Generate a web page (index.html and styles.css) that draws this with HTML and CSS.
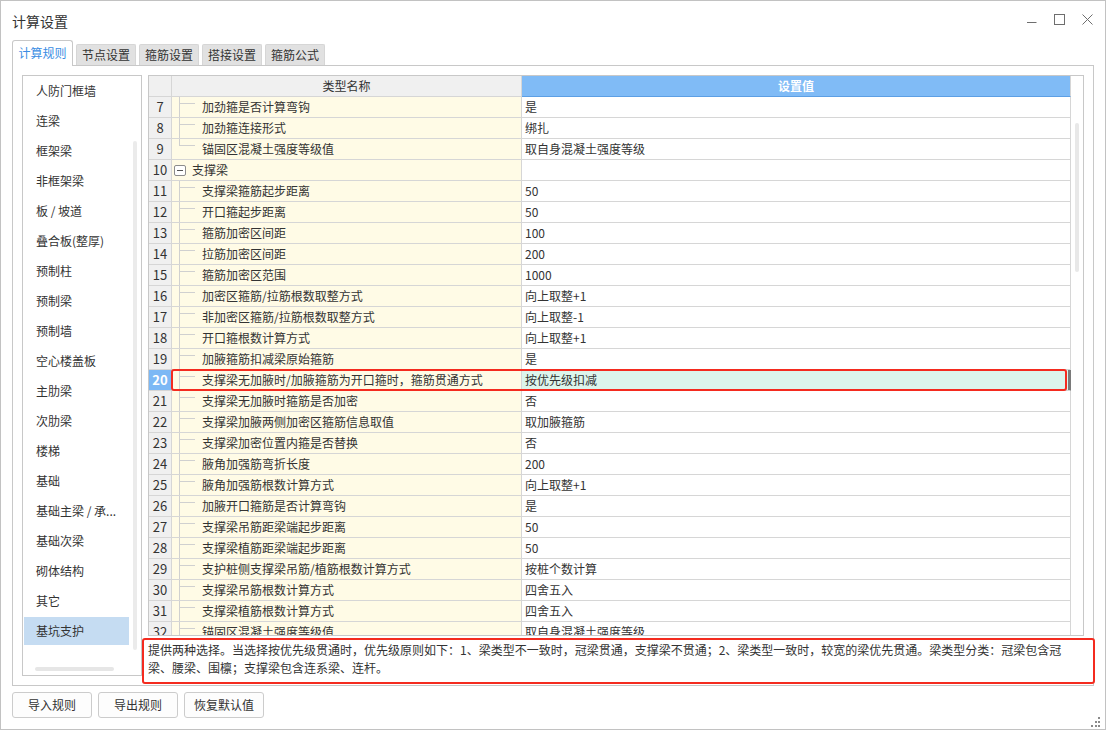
FILE: index.html
```html
<!DOCTYPE html>
<html lang="zh">
<head>
<meta charset="utf-8">
<title>计算设置</title>
<link rel="stylesheet" href="styles.css">
</head>
<body>
<div class="window">
  <div class="titlebar">
    <div class="title">计算设置</div>
    <div class="controls">
      <svg class="ctl" width="28" height="28" viewBox="0 0 28 28"><path d="M10 15.5H19.5" stroke="#6e6e6e" stroke-width="1" fill="none"/></svg>
      <svg class="ctl" width="28" height="28" viewBox="0 0 28 28"><rect x="9.5" y="7.5" width="10" height="10" stroke="#6e6e6e" stroke-width="1" fill="none"/></svg>
      <svg class="ctl" width="28" height="28" viewBox="0 0 28 28"><path d="M9.5 7.5L19.5 17.5M19.5 7.5L9.5 17.5" stroke="#6e6e6e" stroke-width="1" fill="none"/></svg>
    </div>
  </div>
  <div class="tabs">
    <div class="tab active">计算规则</div>
    <div class="tab">节点设置</div>
    <div class="tab">箍筋设置</div>
    <div class="tab">搭接设置</div>
    <div class="tab">箍筋公式</div>
  </div>
  <div class="panel">
    <div class="list">
      <div class="item">人防门框墙</div>
      <div class="item">连梁</div>
      <div class="item">框架梁</div>
      <div class="item">非框架梁</div>
      <div class="item">板 / 坡道</div>
      <div class="item">叠合板(整厚)</div>
      <div class="item">预制柱</div>
      <div class="item">预制梁</div>
      <div class="item">预制墙</div>
      <div class="item">空心楼盖板</div>
      <div class="item">主肋梁</div>
      <div class="item">次肋梁</div>
      <div class="item">楼梯</div>
      <div class="item">基础</div>
      <div class="item">基础主梁 / 承...</div>
      <div class="item">基础次梁</div>
      <div class="item">砌体结构</div>
      <div class="item">其它</div>
      <div class="item selected">基坑支护</div>
      <div class="vthumb"></div>
      <div class="hthumb"></div>
    </div>
    <div class="right">
      <div class="tablebox">
        <div class="grid">
          <div class="row head"><div class="c num"></div><div class="c name">类型名称</div><div class="c val">设置值</div></div>
          <div class="row"><div class="c num">7</div><div class="c name"><span class="tw"></span>加劲箍是否计算弯钩</div><div class="c val">是</div></div>
          <div class="row"><div class="c num">8</div><div class="c name"><span class="tw"></span>加劲箍连接形式</div><div class="c val">绑扎</div></div>
          <div class="row"><div class="c num">9</div><div class="c name"><span class="tw end"></span>锚固区混凝土强度等级值</div><div class="c val">取自身混凝土强度等级</div></div>
          <div class="row"><div class="c num">10</div><div class="c name"><span class="tog"></span>支撑梁</div><div class="c val"></div></div>
          <div class="row"><div class="c num">11</div><div class="c name"><span class="tw"></span>支撑梁箍筋起步距离</div><div class="c val">50</div></div>
          <div class="row"><div class="c num">12</div><div class="c name"><span class="tw"></span>开口箍起步距离</div><div class="c val">50</div></div>
          <div class="row"><div class="c num">13</div><div class="c name"><span class="tw"></span>箍筋加密区间距</div><div class="c val">100</div></div>
          <div class="row"><div class="c num">14</div><div class="c name"><span class="tw"></span>拉筋加密区间距</div><div class="c val">200</div></div>
          <div class="row"><div class="c num">15</div><div class="c name"><span class="tw"></span>箍筋加密区范围</div><div class="c val">1000</div></div>
          <div class="row"><div class="c num">16</div><div class="c name"><span class="tw"></span>加密区箍筋/拉筋根数取整方式</div><div class="c val">向上取整+1</div></div>
          <div class="row"><div class="c num">17</div><div class="c name"><span class="tw"></span>非加密区箍筋/拉筋根数取整方式</div><div class="c val">向上取整-1</div></div>
          <div class="row"><div class="c num">18</div><div class="c name"><span class="tw"></span>开口箍根数计算方式</div><div class="c val">向上取整+1</div></div>
          <div class="row"><div class="c num">19</div><div class="c name"><span class="tw"></span>加腋箍筋扣减梁原始箍筋</div><div class="c val">是</div></div>
          <div class="row sel"><div class="c num">20</div><div class="c name"><span class="tw"></span>支撑梁无加腋时/加腋箍筋为开口箍时，箍筋贯通方式</div><div class="c val">按优先级扣减</div></div>
          <div class="row"><div class="c num">21</div><div class="c name"><span class="tw"></span>支撑梁无加腋时箍筋是否加密</div><div class="c val">否</div></div>
          <div class="row"><div class="c num">22</div><div class="c name"><span class="tw"></span>支撑梁加腋两侧加密区箍筋信息取值</div><div class="c val">取加腋箍筋</div></div>
          <div class="row"><div class="c num">23</div><div class="c name"><span class="tw"></span>支撑梁加密位置内箍是否替换</div><div class="c val">否</div></div>
          <div class="row"><div class="c num">24</div><div class="c name"><span class="tw"></span>腋角加强筋弯折长度</div><div class="c val">200</div></div>
          <div class="row"><div class="c num">25</div><div class="c name"><span class="tw"></span>腋角加强筋根数计算方式</div><div class="c val">向上取整+1</div></div>
          <div class="row"><div class="c num">26</div><div class="c name"><span class="tw"></span>加腋开口箍筋是否计算弯钩</div><div class="c val">是</div></div>
          <div class="row"><div class="c num">27</div><div class="c name"><span class="tw"></span>支撑梁吊筋距梁端起步距离</div><div class="c val">50</div></div>
          <div class="row"><div class="c num">28</div><div class="c name"><span class="tw"></span>支撑梁植筋距梁端起步距离</div><div class="c val">50</div></div>
          <div class="row"><div class="c num">29</div><div class="c name"><span class="tw"></span>支护桩侧支撑梁吊筋/植筋根数计算方式</div><div class="c val">按桩个数计算</div></div>
          <div class="row"><div class="c num">30</div><div class="c name"><span class="tw"></span>支撑梁吊筋根数计算方式</div><div class="c val">四舍五入</div></div>
          <div class="row"><div class="c num">31</div><div class="c name"><span class="tw"></span>支撑梁植筋根数计算方式</div><div class="c val">四舍五入</div></div>
          <div class="row"><div class="c num">32</div><div class="c name"><span class="tw"></span>锚固区混凝土强度等级值</div><div class="c val">取自身混凝土强度等级</div></div>
          <div class="hl"></div>
        </div>
        <div class="vscroll"><div class="thumb"></div></div>
      </div>
      <div class="desc">提供两种选择。当选择按优先级贯通时，优先级原则如下：1、梁类型不一致时，冠梁贯通，支撑梁不贯通；2、梁类型一致时，较宽的梁优先贯通。梁类型分类：冠梁包含冠<br>梁、腰梁、围檩；支撑梁包含连系梁、连杆。</div>
    </div>
  </div>
  <div class="buttons">
    <div class="btn">导入规则</div>
    <div class="btn">导出规则</div>
    <div class="btn">恢复默认值</div>
  </div>
  <svg class="grip" width="10" height="10" viewBox="0 0 10 10">
    <rect x="7" y="0" width="2" height="2" fill="#8a8a8a"/>
    <rect x="4" y="4" width="2" height="2" fill="#8a8a8a"/>
    <rect x="7" y="4" width="2" height="2" fill="#8a8a8a"/>
    <rect x="0" y="8" width="2" height="2" fill="#8a8a8a"/>
    <rect x="4" y="8" width="2" height="2" fill="#8a8a8a"/>
    <rect x="7" y="8" width="2" height="2" fill="#8a8a8a"/>
  </svg>
</div>
</body>
</html>
```
FILE: styles.css
```css
* { box-sizing: border-box; }
html, body { margin: 0; padding: 0; background: #ffffff; }
body {
  font-family: "Noto Sans CJK SC", "Noto Sans", sans-serif;
  font-size: 12px;
  color: #333333;
}
.window {
  position: relative;
  width: 1106px;
  height: 730px;
  border: 1px solid #c2c2c2;
  background: #ffffff;
}
.titlebar {
  height: 39px;
  display: flex;
  justify-content: space-between;
  align-items: flex-start;
  padding: 0 4px 0 11px;
}
.title {
  font-size: 14px;
  line-height: 20px;
  margin-top: 10px;
  color: #333333;
}
.controls { display: flex; margin-top: 6px; }
.ctl { display: block; }

.tabs {
  display: flex;
  align-items: flex-end;
  gap: 3px;
  height: 25px;
  padding-left: 11px;
  position: relative;
  z-index: 1;
}
.tab {
  width: 60px;
  height: 21px;
  line-height: 20px;
  text-align: center;
  background: #e1e1e1;
  border: 1px solid #d6d6d6;
  border-bottom: 0;
  border-radius: 2px 2px 0 0;
  color: #333333;
}
.tab.active {
  width: 61px;
  height: 26px;
  line-height: 24px;
  margin-bottom: -1px;
  background: #ffffff;
  border-color: #c8c8c8;
  border-radius: 3px 3px 0 0;
  color: #3a8de3;
}
.panel {
  margin: 0 11px;
  height: 621px;
  border: 1px solid #c8c8c8;
  display: flex;
  align-items: flex-start;
  gap: 6px;
  padding: 9px 9px 0 9px;
}
.list {
  position: relative;
  width: 120px;
  height: 601px;
  border: 1px solid #c8c8c8;
  padding-top: 1px;
  overflow: hidden;
}
.item {
  width: 105px;
  height: 28px;
  line-height: 28px;
  margin: 0 0 2px 1px;
  padding-left: 12px;
  white-space: nowrap;
  color: #333333;
}
.item.selected { background: #c5dcf2; }
.vthumb {
  position: absolute;
  left: 110px;
  top: 65px;
  width: 4px;
  height: 509px;
  border-radius: 2px;
  background: #ebebeb;
}
.hthumb {
  position: absolute;
  left: 12px;
  top: 591px;
  width: 79px;
  height: 4px;
  border-radius: 2px;
  background: #e6e6e6;
}
.right {
  width: 936px;
  display: flex;
  flex-direction: column;
}
.tablebox {
  height: 561px;
  border: 1px solid #c8c8c8;
  display: flex;
  overflow: hidden;
}
.grid {
  position: relative;
  width: 922px;
  flex: none;
  overflow: hidden;
}
.row {
  display: flex;
  height: 21px;
}
.c {
  height: 21px;
  line-height: 20px;
  border-right: 1px solid #d6d6d6;
  border-bottom: 1px solid #d6d6d6;
  white-space: nowrap;
  overflow: hidden;
}
.num {
  width: 23px;
  flex: none;
  background: #f0f0f0;
  text-align: center;
  font-size: 13px;
}
.name {
  width: 350px;
  flex: none;
  background: #fffbe6;
  display: flex;
  align-items: center;
}
.val {
  width: 549px;
  flex: none;
  padding-left: 3px;
  background: #ffffff;
}
.row.head .num,
.row.head .name { background: #f0f0f0; }
.row.head .name { justify-content: center; }
.row.head .val {
  background: #80bbf6;
  border-bottom-color: #5d9fe4;
  color: #ffffff;
  font-weight: 700;
  text-align: center;
  padding-left: 0;
}
.tw {
  flex: none;
  align-self: stretch;
  width: 16px;
  margin: 0 7px;
  background:
    linear-gradient(#d0d0d0, #d0d0d0) 0 0 / 1px 100% no-repeat,
    linear-gradient(#d0d0d0, #d0d0d0) 0 6px / 100% 1px no-repeat;
}
.tw.end {
  background:
    linear-gradient(#d0d0d0, #d0d0d0) 0 0 / 1px 7px no-repeat,
    linear-gradient(#d0d0d0, #d0d0d0) 0 6px / 100% 1px no-repeat;
}
.tog {
  position: relative;
  flex: none;
  width: 12px;
  height: 11px;
  margin: 0 6px 0 2px;
  border: 1px solid #8c8c8c;
  border-radius: 2px;
  background: #ffffff;
}
.tog::after {
  content: "";
  position: absolute;
  left: 2px;
  top: 4px;
  width: 6px;
  height: 1px;
  background: #555555;
}
.row.sel .num {
  background: #7cb8f5;
  color: #ffffff;
  font-weight: 700;
}
.row.sel .val {
  background: #dcf5ec;
  border-right-color: #7a7a7a;
  box-shadow: inset -2px 0 0 #7a7a7a;
}
.hl {
  position: absolute;
  left: 22px;
  top: 293px;
  width: 896px;
  height: 22px;
  border: 2px solid #f42b1f;
  border-radius: 3px;
}
.vscroll {
  position: relative;
  width: 12px;
  flex: none;
}
.thumb {
  position: absolute;
  left: 4px;
  top: 47px;
  width: 4px;
  height: 149px;
  border-radius: 2px;
  background: #e8e8e8;
}
.desc {
  position: relative;
  margin-top: 2px;
  height: 46px;
  padding-top: 3px;
  line-height: 18px;
  color: #333333;
}
.desc::after {
  content: "";
  position: absolute;
  left: -6px;
  right: -11px;
  top: 0;
  bottom: 0;
  border: 2px solid #f42b1f;
  border-radius: 3px;
}
.buttons {
  display: flex;
  gap: 6px;
  margin: 6px 0 0 11px;
}
.btn {
  width: 80px;
  height: 26px;
  line-height: 24px;
  text-align: center;
  border: 1px solid #cccccc;
  border-radius: 3px;
  background: #fdfdfd;
  color: #333333;
}
.grip {
  position: absolute;
  right: 4px;
  bottom: 2px;
}
```
